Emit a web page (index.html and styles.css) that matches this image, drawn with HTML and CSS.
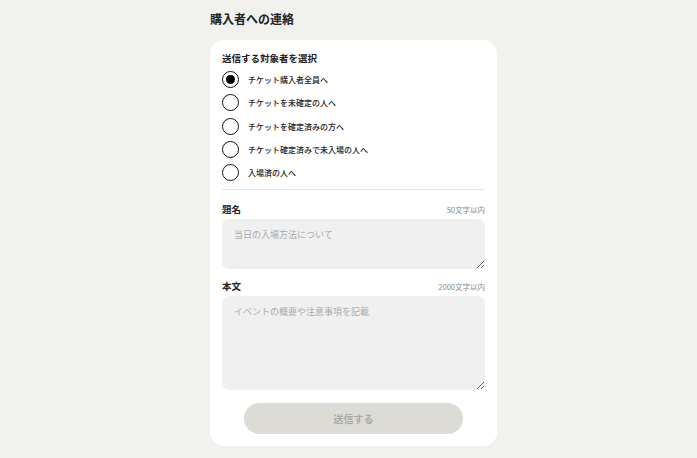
FILE: index.html
```html
<!DOCTYPE html>
<html lang="ja">
<head>
    <meta charset="UTF-8">
    <meta name="viewport" content="width=device-width, initial-scale=1.0">
    <title>購入者への連絡</title>
    <link rel="stylesheet" href="styles.css">
</head>
<body>
    <div class="contact-page">
        <h1>購入者への連絡</h1>
        <form class="contact-card">
            <p class="section-title">送信する対象者を選択</p>
            <div class="target-list">
                <label class="target"><input type="radio" name="target" checked><span>チケット購入者全員へ</span></label>
                <label class="target"><input type="radio" name="target"><span>チケットを未確定の人へ</span></label>
                <label class="target"><input type="radio" name="target"><span>チケットを確定済みの方へ</span></label>
                <label class="target"><input type="radio" name="target"><span>チケット確定済みで未入場の人へ</span></label>
                <label class="target"><input type="radio" name="target"><span>入場済の人へ</span></label>
            </div>
            <hr>
            <div class="field">
                <div class="field-head">
                    <label for="subject">題名</label>
                    <span class="limit">50文字以内</span>
                </div>
                <textarea id="subject" class="subject" placeholder="当日の入場方法について"></textarea>
            </div>
            <div class="field">
                <div class="field-head">
                    <label for="body">本文</label>
                    <span class="limit">2000文字以内</span>
                </div>
                <textarea id="body" class="body-text" placeholder="イベントの概要や注意事項を記載"></textarea>
            </div>
            <button type="button" class="send" disabled>送信する</button>
        </form>
    </div>
</body>
</html>
```

FILE: styles.css
```css
body {
    font-family: "Noto Sans CJK JP", "Noto Sans", sans-serif;
    background-color: #f1f1ed;
    margin: 0;
    padding-left: 10px;
    color: #222;
}
.contact-page {
    width: 287px;
    margin: 0 auto;
    padding: 9px 0 12px;
}
.contact-page h1 {
    font-size: 12px;
    font-weight: 700;
    margin: 0 0 12px;
    line-height: 19px;
}
.contact-card {
    background: #ffffff;
    border-radius: 14px;
    padding: 12px;
}
.section-title {
    font-size: 9.5px;
    font-weight: 700;
    margin: 0 0 4px;
    line-height: 12px;
}
.target-list {
    display: flex;
    flex-direction: column;
}
.target {
    display: flex;
    align-items: center;
    gap: 9px;
    height: 23.3px;
    font-size: 8px;
    font-weight: 500;
}
.target input {
    appearance: none;
    margin: 0;
    width: 17px;
    height: 17px;
    border: 1.5px solid #111;
    border-radius: 50%;
    display: grid;
    place-items: center;
    background: #fff;
}
.target input:checked::after {
    content: "";
    width: 9px;
    height: 9px;
    border-radius: 50%;
    background: #000;
}
.contact-card hr {
    border: none;
    border-top: 1px solid #e6e6e6;
    margin: 5px 0 12px;
}
.field {
    margin-bottom: 10px;
}
.field-head {
    display: flex;
    justify-content: space-between;
    align-items: baseline;
    margin-bottom: 3px;
}
.field-head label {
    font-size: 9.5px;
    font-weight: 700;
}
.limit {
    font-size: 7.5px;
    color: #888;
}
.contact-card textarea {
    display: block;
    box-sizing: border-box;
    width: 100%;
    border: none;
    border-radius: 7px;
    background: #f0f0f0;
    padding: 9px 12px;
    font-family: inherit;
    font-size: 9px;
    resize: vertical;
}
.contact-card textarea::placeholder {
    color: #aaa;
}
.subject {
    height: 50px;
}
.body-text {
    height: 94px;
}
.send {
    display: block;
    width: 219px;
    height: 31px;
    margin: 13px auto 0;
    border: none;
    border-radius: 16px;
    background: #dcdbd5;
    color: #aaa9a3;
    font-family: inherit;
    font-size: 10px;
    font-weight: 700;
}
```
